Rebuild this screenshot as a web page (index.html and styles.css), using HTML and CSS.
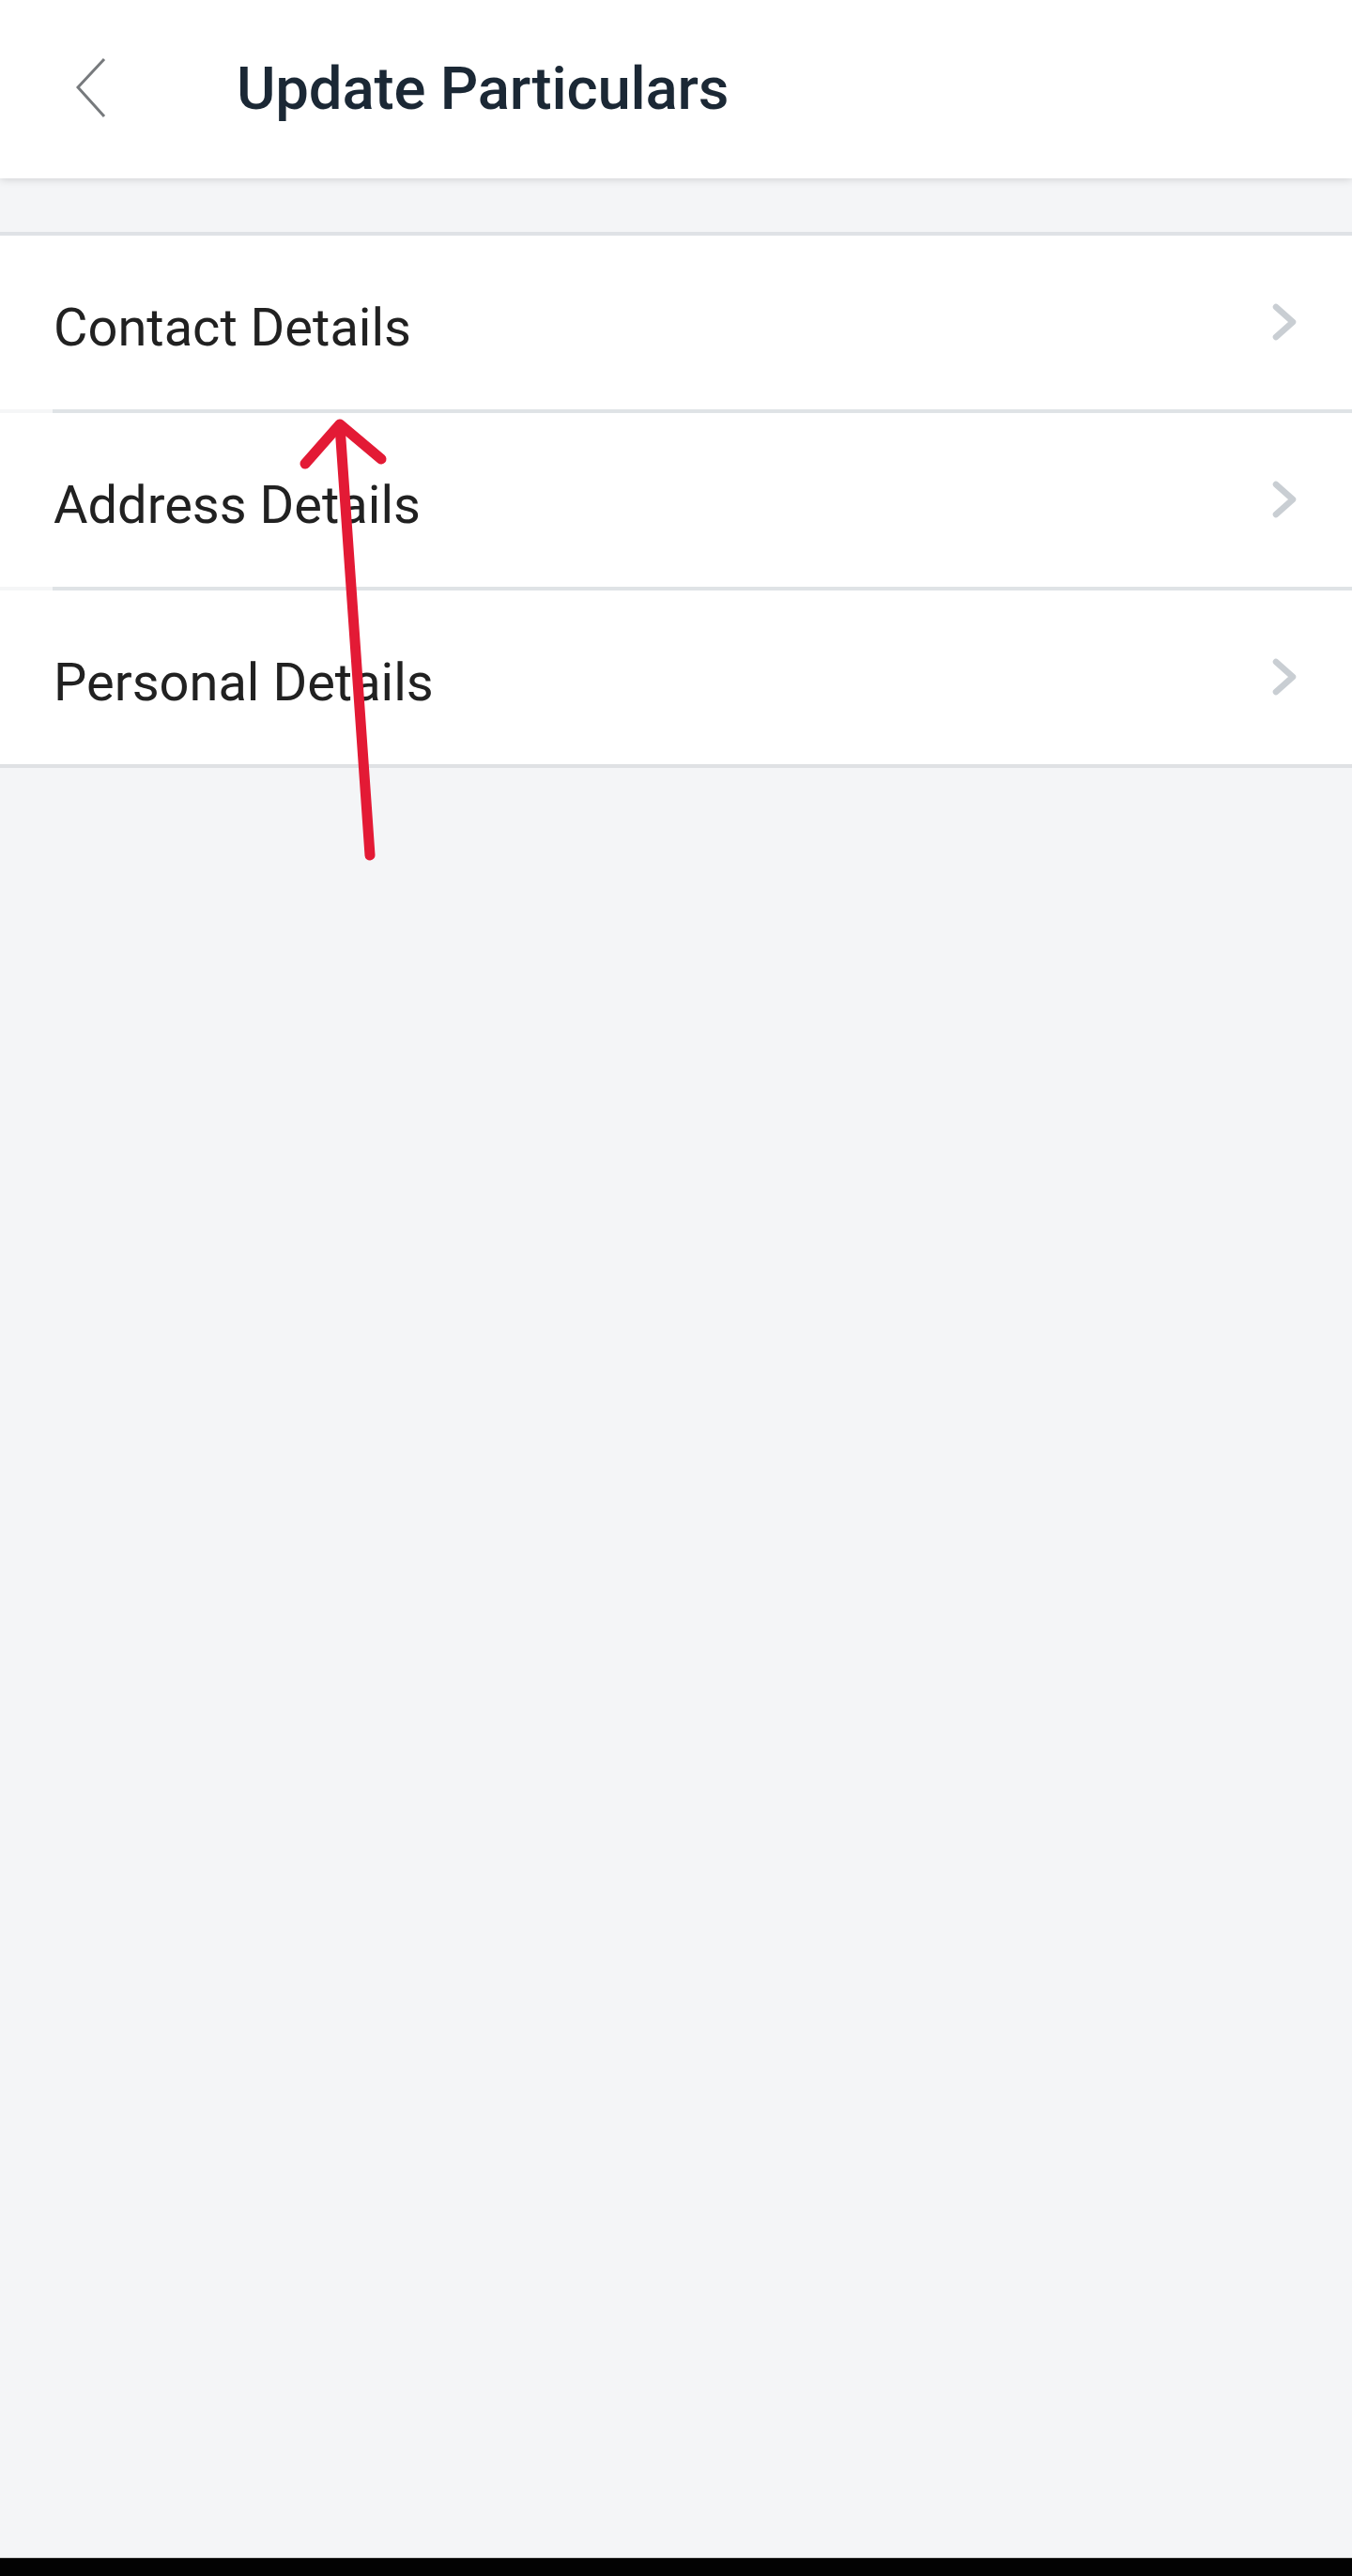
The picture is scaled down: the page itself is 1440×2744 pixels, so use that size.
FILE: index.html
```html
<!DOCTYPE html>
<html lang="en">
<head>
<meta charset="utf-8">
<title>Update Particulars</title>
<link rel="stylesheet" href="styles.css">
</head>
<body>
<div class="screen">
  <header class="appbar">
    <button class="back" aria-label="Back">
      <svg width="40" height="70" viewBox="0 0 40 70"><polyline points="30,3 2,33 30,64" fill="none" stroke="#777a7d" stroke-width="3"/></svg>
    </button>
    <h1 class="title">Update Particulars</h1>
  </header>
  <main class="content">
    <ul class="menu">
      <li class="item"><span class="label">Contact Details</span><svg class="chev" width="30" height="44" viewBox="0 0 30 44"><polyline points="5,5 23,21 5,37" fill="none" stroke="#c9ced3" stroke-width="6.5" stroke-linecap="round" stroke-linejoin="round"/></svg></li>
      <li class="item"><span class="label">Address Details</span><svg class="chev" width="30" height="44" viewBox="0 0 30 44"><polyline points="5,5 23,21 5,37" fill="none" stroke="#c9ced3" stroke-width="6.5" stroke-linecap="round" stroke-linejoin="round"/></svg></li>
      <li class="item"><span class="label">Personal Details</span><svg class="chev" width="30" height="44" viewBox="0 0 30 44"><polyline points="5,5 23,21 5,37" fill="none" stroke="#c9ced3" stroke-width="6.5" stroke-linecap="round" stroke-linejoin="round"/></svg></li>
    </ul>
  </main>
  <div class="navbar"></div>
  <svg class="annotation" width="1440" height="1000" viewBox="0 0 1440 1000">
    <path d="M394 911 L362 454" fill="none" stroke="#e31a35" stroke-width="11" stroke-linecap="round"/>
    <path d="M325 494 L362 452 L406 489" fill="none" stroke="#e31a35" stroke-width="11" stroke-linecap="round" stroke-linejoin="round"/>
  </svg>
</div>
</body>
</html>
```
FILE: styles.css
```css
* { box-sizing: border-box; }
html, body { margin: 0; padding: 0; }
body {
  background: #f4f5f7;
  font-family: Roboto, "Liberation Sans", Arial, sans-serif;
}
.screen {
  position: relative;
  width: 1440px;
  height: 2744px;
  display: flex;
  flex-direction: column;
}
.appbar {
  height: 190px;
  background: #ffffff;
  display: flex;
  align-items: center;
  box-shadow: 0 2px 8px rgba(0, 0, 0, 0.13);
  position: relative;
  z-index: 1;
  flex: none;
}
.back {
  border: 0;
  background: none;
  padding: 0;
  margin: 0 0 0 81px;
  width: 40px;
  height: 70px;
  display: flex;
  align-items: center;
  justify-content: center;
  cursor: pointer;
}
.title {
  margin: 0 0 0 131px;
  font-size: 63.5px;
  font-weight: 500;
  color: #1b2835;
  letter-spacing: -0.2px;
  line-height: 1;
}
.content {
  flex: 1;
  padding-top: 57px;
}
.menu {
  list-style: none;
  margin: 0;
  padding: 0;
  background: #ffffff;
  border-top: 4px solid #dfe2e6;
  border-bottom: 4px solid #dfe1e4;
}
.item {
  height: 185px;
  display: flex;
  align-items: center;
  justify-content: space-between;
  padding: 0 56px 0 57px;
  position: relative;
}
.item + .item {
  height: 189px;
  border-top: 4px solid #dfe3e6;
}
.item + .item::before {
  content: "";
  position: absolute;
  left: 0;
  top: -4px;
  width: 56px;
  height: 4px;
  background: #f5f6f7;
}
.label {
  font-size: 56px;
  color: #212121;
  line-height: 1;
  padding-top: 10px;
}
.chev {
  display: block;
}
.navbar {
  flex: none;
  height: 20px;
  background: #030303;
  border-top: 1px solid #c8c8c8;
}
.annotation {
  position: absolute;
  left: 0;
  top: 0;
  pointer-events: none;
  z-index: 2;
}
```
